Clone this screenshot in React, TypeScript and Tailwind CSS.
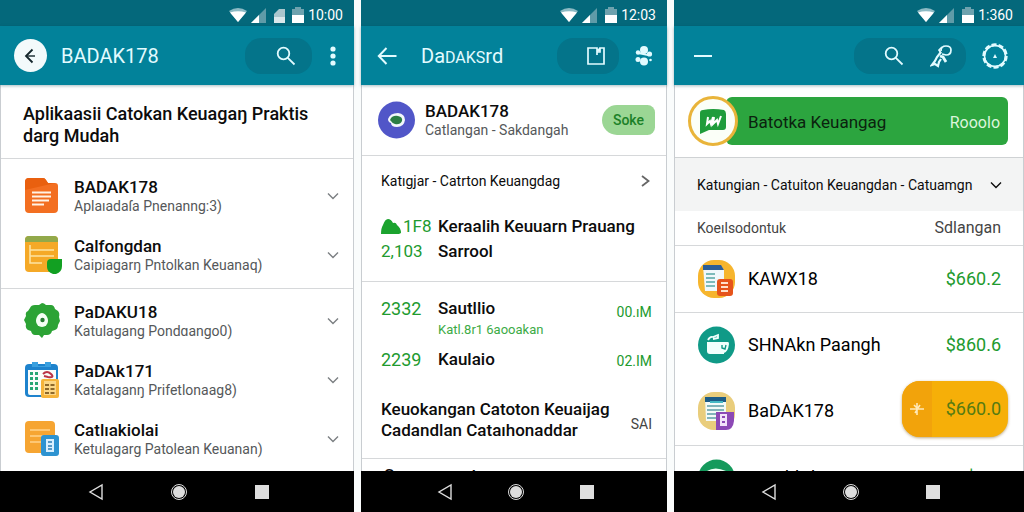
import type { ReactNode } from "react";

type PhoneProps = {
  actions: ReactNode;
  children: ReactNode;
  leading: ReactNode;
  hasStorage?: boolean;
  time: string;
  title?: ReactNode;
};

type EntryProps = {
  icon: ReactNode;
  title: string;
  subtitle: string;
};

function StatusBar({ time, hasStorage }: { time: string; hasStorage?: boolean }) {
  return (
    <div className="flex h-[26px] shrink-0 items-center justify-end bg-[#04687b] pt-1 pr-[11px] text-white">
      <svg width="18" height="14" viewBox="0 0 18 14" aria-hidden="true">
        <path d="M0 3Q9-3 18 3L9 14Z" fill="#8cbac4" />
        <path d="M1 4.500Q9 2 17 4.500L9 14Z" fill="#fff" />
      </svg>
      <svg width="15" height="15" viewBox="0 0 15 15" className="ml-1" aria-hidden="true">
        <path d="M15 0V15H0Z" fill="#5f9ba8" />
        <path d="M8 7V15H0Z" fill="#fff" />
      </svg>
      {hasStorage ? (
        <svg width="12" height="15" viewBox="0 0 12 15" className="ml-2" aria-hidden="true">
          <path d="M5 1h6v14H0V6Z" fill="#aac6cd" />
          <path d="M0 9h11v6H0Z" fill="#dbe8eb" />
        </svg>
      ) : null}
      <svg
        width="12"
        height="16"
        viewBox="0 0 12 16"
        className={hasStorage ? "ml-1.5" : "ml-2"}
        aria-hidden="true"
      >
        <path d="M3 0h6v2h3v14H0V2h3Z" fill="#6ea2ae" />
        <path d="M0 8h12v8H0Z" fill="#fff" />
      </svg>
      <span className="ml-1 text-sm leading-4">{time}</span>
    </div>
  );
}

function NavBar() {
  return (
    <nav className="flex h-[41px] shrink-0 justify-center bg-black pl-1">
      <div className="grid w-[71%] grid-cols-3 items-center justify-items-center">
        <button type="button" aria-label="Back">
          <svg width="16" height="18" viewBox="0 0 16 18">
            <path d="M14 2v14L2 9Z" fill="none" stroke="#ddd" strokeWidth="1.400" />
          </svg>
        </button>
        <button type="button" aria-label="Home">
          <svg width="18" height="18" viewBox="0 0 18 18">
            <circle cx="9" cy="9" r="7.500" fill="none" stroke="#ddd" strokeWidth="1" />
            <circle cx="9" cy="9" r="6" fill="#ddd" />
          </svg>
        </button>
        <button type="button" aria-label="Recent" className="size-3.5 bg-[#dedede]" />
      </div>
    </nav>
  );
}

function Phone({ actions, children, hasStorage, leading, time, title }: PhoneProps) {
  return (
    <section className="flex h-screen min-w-0 flex-col bg-white">
      <StatusBar time={time} hasStorage={hasStorage} />
      <header className="z-10 flex h-[59px] shrink-0 items-center bg-[#02829a] shadow-[0_1px_3px_rgba(0,60,80,0.35)]">
        {leading}
        {title ? <h1 className="text-xl text-[#e2fbff]">{title}</h1> : null}
        <div className="ml-auto flex items-center">{actions}</div>
      </header>
      <div className="flex min-h-0 flex-1 flex-col overflow-hidden border-x border-[#c9cdd1]">
        {children}
      </div>
      <NavBar />
    </section>
  );
}

function SearchIcon() {
  return (
    <svg width="20" height="20" viewBox="0 0 20 20" fill="none" stroke="#e2fbff" strokeWidth="1.800">
      <circle cx="7.500" cy="7.500" r="5.800" />
      <path d="M11.800 11.800 18.500 18.500" />
    </svg>
  );
}

function ChevronDown({ className }: { className?: string }) {
  return (
    <svg width="12" height="8" viewBox="0 0 12 8" fill="none" stroke="currentColor" strokeWidth="1.400" className={className}>
      <path d="M1 1.500 6 6.500 11 1.500" />
    </svg>
  );
}

function OrangeFileIcon() {
  return (
    <svg width="36" height="38" viewBox="0 0 36 38">
      <path d="M5 1h14q2 0 3 2l2 3h7q3 0 3 3v23q0 4-4 4H5q-4 0-4-4V5q0-4 4-4Z" fill="#f36f21" />
      <path d="M1 13V5q0-4 4-4h14q2 0 3 2l2 3h7" fill="#e9600f" />
      <path d="M8 15.500h19M8 19.500h19M8 23.500h17M8 27.500h12" stroke="#fff3e6" strokeWidth="2" />
    </svg>
  );
}

function YellowNoteIcon() {
  return (
    <svg width="38" height="38" viewBox="0 0 38 38">
      <rect x="1" y="0" width="33" height="36" rx="4" fill="#f5a927" />
      <path d="M1 6V4q0-4 4-4h25q4 0 4 4v2Z" fill="#92a94a" />
      <path d="M6 9v18h12M6 14h24M6 20h24" fill="none" stroke="#fde3a2" strokeWidth="1.600" />
      <path d="M23 27q0-4 4-4h11v7q0 6-6 8h-3q-6-2-6-7Z" fill="#12a022" />
    </svg>
  );
}

function GreenBadgeIcon() {
  return (
    <svg width="36" height="36" viewBox="0 0 36 36">
      <path
        d="M18 0q2 0 4 2l5 0q3 0 4 4l3 2q2 2 1 6l1 4-2 4q0 4-3 5l-3 1q-1 4-5 4h-3l-2 3-3-3h-4q-3 0-4-4l-3-1q-3-2-2-6L0 17l2-4q-1-4 2-5l2-3q1-3 5-3h4Z"
        fill="#2ca335"
      />
      <path d="M18 10c3 0 6 4 6 8a6 6 0 0 1-12 0c0-4 3-8 6-8Z" fill="#f5fff5" />
      <circle cx="18.500" cy="17" r="2.200" fill="#267a32" />
    </svg>
  );
}

function CalendarIcon() {
  return (
    <svg width="36" height="38" viewBox="0 0 36 38">
      <rect x="1" y="3" width="33" height="33" rx="4" fill="#1e83cd" />
      <path d="M8 1h6v4h7V1h6v5H8Z" fill="#3aa0df" />
      <path d="M4 9h28v25H6q-2 0-2-2Z" fill="#fbfdfb" />
      <path d="M6 12.500h3m2 0h3M6 17.500h3m2 0h3M6 22.500h3m2 0h3M6 27.500h3m2 0h3" stroke="#28a774" strokeWidth="3" />
      <path d="M19 13q4-4 8 0t-3 3l-4-1" fill="none" stroke="#bb3346" strokeWidth="2" />
      <rect x="17" y="18" width="18" height="19" rx="2" fill="#f6b43b" />
      <path d="M20 20h12v14H20Z" fill="#fbd787" />
      <path d="M21 24h10M21 28h10M21 32h10" stroke="#8d682b" strokeWidth="1.800" strokeDasharray="4 1.500" />
    </svg>
  );
}

function OrangeBlueIcon() {
  return (
    <svg width="36" height="38" viewBox="0 0 36 38">
      <rect x="1" y="1" width="30" height="32" rx="4" fill="#f6a532" />
      <path d="M6 10h20M6 16h18M6 22h12" stroke="#ffd28a" strokeWidth="1.600" />
      <rect x="17" y="15" width="18" height="21" rx="3" fill="#2d93d1" />
      <path d="M22 19h8v13h-8Z" fill="#d8efff" />
      <path d="M24 22h4m-4 4h4m-4 3h4" stroke="#2d7fb6" strokeWidth="1.400" />
    </svg>
  );
}

function Entry({ icon, title, subtitle }: EntryProps) {
  return (
    <li className="flex h-[59px] items-center pr-3.5 pl-[23px]">
      <span className="flex w-[50px] shrink-0">{icon}</span>
      <div className="min-w-0 flex-1">
        <p className="text-[17px] leading-5 font-medium text-[#0c0c0c]">{title}</p>
        <p className="text-sm leading-[18px] text-[#55585a]">{subtitle}</p>
      </div>
      <button type="button" aria-label={`Open ${title}`} className="text-[#7b7f82]">
        <ChevronDown />
      </button>
    </li>
  );
}

function CatalogPhone() {
  return (
    <Phone
      time="10:00"
      hasStorage
      title="BADAK178"
      leading={
        <button
          type="button"
          aria-label="Back"
          className="mr-3.5 ml-3.5 flex size-[33px] items-center justify-center rounded-full bg-[#f3fafb]"
        >
          <svg width="14" height="16" viewBox="0 0 14 16" fill="none" stroke="#14262b" strokeWidth="1.800">
            <path d="M8.500 1.500 2 8l6.500 6.500" />
            <path d="M2 8h9" strokeWidth="1.400" />
          </svg>
        </button>
      }
      actions={
        <>
          <button
            type="button"
            aria-label="Search"
            className="flex h-9 w-[67px] items-center justify-end rounded-2xl bg-[#04748a] pr-4"
          >
            <SearchIcon />
          </button>
          <button type="button" aria-label="More" className="px-[18px]">
            <svg width="6" height="20" viewBox="0 0 6 20" fill="#e2fbff">
              <circle cx="3" cy="3" r="2.600" />
              <circle cx="3" cy="10" r="2.600" />
              <circle cx="3" cy="17" r="2.600" />
            </svg>
          </button>
        </>
      }
    >
      <h2 className="border-b border-[#d6d8da] px-[22px] pt-[18px] pb-[11px] text-lg leading-[22px] font-medium text-[#0c0c0c]">
        Aplikaasii Catokan Keuagaŋ Praktis darg Mudah
      </h2>
      <ul className="border-b border-[#d6d8da] pt-[7px] pb-1">
        <Entry icon={<OrangeFileIcon />} title="BADAK178" subtitle="Aplaıadaſa Pnenanng:3)" />
        <Entry icon={<YellowNoteIcon />} title="Calfongdan" subtitle="Caipiagarŋ Pntolkan Keuanaq)" />
      </ul>
      <ul className="pt-0.5">
        <Entry icon={<GreenBadgeIcon />} title="PaDAKU18" subtitle="Katulagang Pondɑango0)" />
        <Entry icon={<CalendarIcon />} title="PaDAk171" subtitle="Katalaganŋ Prifetlonaag8)" />
        <Entry icon={<OrangeBlueIcon />} title="Catlıakiolai" subtitle="Ketulagarg Patolean Keuanan)" />
      </ul>
    </Phone>
  );
}

function LedgerPhone() {
  return (
    <Phone
      time="12:03"
      title={
        <>
          Da<span className="text-base">DAKS</span>rd
        </>
      }
      leading={
        <button type="button" aria-label="Back" className="mr-6 ml-4">
          <svg width="20" height="18" viewBox="0 0 20 18" fill="none" stroke="#e2fbff" strokeWidth="2">
            <path d="M9.500 1 1.800 9l7.700 8M2 9h17.500" />
          </svg>
        </button>
      }
      actions={
        <>
          <button
            type="button"
            aria-label="Documents"
            className="flex h-9 w-[62px] items-center justify-end rounded-2xl bg-[#04748a] pr-3.5"
          >
            <svg width="18" height="20" viewBox="0 0 18 20" fill="none" stroke="#e2fbff" strokeWidth="1.700">
              <path d="M1 2h9v4h3V2h4v16H1ZM10 9V6l3-4" />
            </svg>
          </button>
          <button type="button" aria-label="More" className="mr-3.5 ml-4">
            <svg width="18" height="20" viewBox="0 0 18 20" fill="#e2fbff">
              <circle cx="9" cy="4" r="4" />
              <circle cx="9" cy="15.500" r="4" />
              <circle cx="3" cy="6.500" r="2.200" />
              <circle cx="3" cy="13.500" r="2.500" />
              <circle cx="14.500" cy="8" r="2.600" />
              <circle cx="15.500" cy="14" r="1.300" />
              <path d="M3 5.500 15 9 13 10 3 8Z" />
            </svg>
          </button>
        </>
      }
    >
      <div className="flex h-[71px] shrink-0 items-center border-b border-[#d6d8da] pr-[11px] pl-4">
        <svg width="37" height="38" viewBox="0 0 37 38" className="mr-2.5 shrink-0" aria-hidden="true">
          <circle cx="18.500" cy="19" r="18.500" fill="#5156c8" />
          <path d="M10 18q2-6 10-6 7 1 7 7-1 7-8 7-6 0-6-4-3-1-3-4Z" fill="#f2f7fb" />
          <path d="M12 19q2-5 8-4 5 1 4 5-2 4-7 3-3-1-5-4Z" fill="#2b7d45" />
        </svg>
        <div className="min-w-0 flex-1">
          <p className="text-[17px] leading-5 font-medium text-[#0c0c0c]">BADAK178</p>
          <p className="text-sm leading-[18px] text-[#55585a]">Catlangan - Sakdangah</p>
        </div>
        <button
          type="button"
          className="h-[30px] w-[53px] rounded-l-2xl rounded-r-lg bg-[#9bd694] text-sm font-medium text-[#1b8128]"
        >
          Soke
        </button>
      </div>
      <button
        type="button"
        className="flex h-[50px] shrink-0 items-center justify-between pr-4 pl-[19px] text-left text-sm text-[#0c0c0c]"
      >
        Katıgjar - Catrton Keuangdag
        <svg width="9" height="12" viewBox="0 0 9 12" fill="none" stroke="#666" strokeWidth="1.800">
          <path d="M1 1 7.500 6 1 11" />
        </svg>
      </button>
      <dl className="grid shrink-0 grid-cols-[57px_1fr] border-b border-[#d6d8da] pt-2 pb-[17px] pl-[19px] text-[17px] leading-[25px]">
        <dt className="flex items-center gap-0.5 text-[#219a2e]">
          <svg width="20" height="17" viewBox="0 0 20 17" fill="#1ba32e" aria-hidden="true">
            <path d="M0 16q0-6 2-9 2-6 5-6 3 0 5 4 3-1 4 2 4 3 4 8l-2 1Z" />
          </svg>
          1F8
        </dt>
        <dd className="font-medium text-[#0c0c0c]">Keraalih Keuuarn Prauang</dd>
        <dt className="text-[#219a2e]">2,103</dt>
        <dd className="font-medium text-[#0c0c0c]">Sarrool</dd>
      </dl>
      <dl className="grid shrink-0 grid-cols-[57px_1fr_auto] pt-3.5 pr-3.5 pl-[19px] text-[17px] leading-[25px]">
        <dt className="text-lg leading-[25px] text-[#219a2e]">2332</dt>
        <dd className="font-medium text-[#0c0c0c]">
          Sautllio
          <span className="block text-[13px] leading-[18px] font-normal text-[#3cab46]">
            Katl.8r1 6aooakan
          </span>
        </dd>
        <dd className="pt-1 text-sm leading-[25px] text-[#219a2e]">00.ıM</dd>
        <dt className="pt-2 text-lg leading-[25px] text-[#219a2e]">2239</dt>
        <dd className="pt-2 font-medium text-[#0c0c0c]">Kaulaio</dd>
        <dd className="pt-2.5 text-sm leading-[25px] text-[#219a2e]">02.IM</dd>
      </dl>
      <div className="flex shrink-0 items-center justify-between border-b border-[#d6d8da] pt-[25px] pr-3.5 pb-[17px] pl-[19px]">
        <h2 className="text-[17px] leading-[21px] font-medium text-[#0c0c0c]">
          Keuokangan Catoton Keuaijag
          <br />
          Cadandlan Cataıhonaddar
        </h2>
        <span className="pt-2 text-sm text-[#444]">SAI</span>
      </div>
      <p className="pt-1 pl-[22px] text-[17px] leading-6 font-medium text-[#0c0c0c]">Sarmoonaat</p>
    </Phone>
  );
}

function ReportIcon() {
  return (
    <svg width="37" height="38" viewBox="0 0 37 38">
      <rect width="37" height="38" rx="16" fill="#f6b52e" />
      <path d="M5 6h18l3 4v21H7Z" fill="#f0f7fb" />
      <path d="M5 5h18l3 5H5Z" fill="#2d5e96" />
      <path d="M8 14h9M8 18h9M8 22h9M8 26h9" stroke="#55a7a5" strokeWidth="1.600" />
      <rect x="19" y="19" width="16" height="17" rx="3" fill="#e6541b" />
      <path d="M23 23h7m-7 4h7m-7 4h7" stroke="#ffe1cb" strokeWidth="2" />
    </svg>
  );
}

function WalletIcon() {
  return (
    <svg width="37" height="38" viewBox="0 0 37 38">
      <circle cx="18.500" cy="19" r="18.500" fill="#109a87" />
      <path d="M9 16h21q1 0 1 2-1 8-5 9v1H12q-3 0-3-3Z" fill="#f1fffc" />
      <path d="M10 14q2-4 5-3l5-2v3l-5 1" fill="none" stroke="#f1fffc" strokeWidth="1.800" />
      <path d="M24 19v3l3 1 1-4" fill="none" stroke="#109a87" strokeWidth="1.400" />
    </svg>
  );
}

function InvoiceIcon() {
  return (
    <svg width="37" height="38" viewBox="0 0 37 38">
      <rect width="37" height="38" rx="16" fill="#e9cd7c" />
      <path d="M7 5h21v24H8Z" fill="#f3faf8" />
      <path d="M7 5h21v5H7Z" fill="#1c5c87" />
      <path d="M12 10h13" stroke="#46b8c4" strokeWidth="2" />
      <path d="M9 14h17M9 18h17M9 22h10M9 26h9" stroke="#5d9da5" strokeWidth="1.400" />
      <path d="M18 20h18v9q-1 9-8 9H18Z" fill="#8c48b5" />
      <path d="M22 22h7v12h-7Z" fill="#f3e3fa" />
      <path d="M24 25h3m-3 5h3" stroke="#8c48b5" strokeWidth="2" />
    </svg>
  );
}

function GreenCupIcon() {
  return (
    <svg width="37" height="38" viewBox="0 0 37 38">
      <circle cx="18.500" cy="19" r="18.500" fill="#159a5c" />
      <path d="M9 12q8-5 19 0v14H9Z" fill="#f1fff6" />
    </svg>
  );
}

function BalancePhone() {
  return (
    <Phone
      time="1:360"
      leading={
        <button type="button" aria-label="Menu" className="ml-5 h-5">
          <span className="block h-0.5 w-[18px] bg-[#e2fbff]" />
        </button>
      }
      actions={
        <>
          <div className="flex h-9 w-28 items-center justify-end gap-[26px] rounded-2xl bg-[#04748a] pr-3.5">
            <button type="button" aria-label="Search">
              <SearchIcon />
            </button>
            <button type="button" aria-label="Tools">
              <svg width="22" height="24" viewBox="0 0 22 24" fill="none" stroke="#e2fbff" strokeWidth="1.700">
                <path d="M11 7q0-5 5-5 5 0 5 4 0 5-5 5l-4-1" />
                <path d="M12 3 9 6l2 3" />
                <path d="M11 8 7 13l-2 4-3 4 3-1 3 2 1-4 2-3" strokeWidth="2.200" />
                <path d="m10 12 3 1 3 5" strokeWidth="2.800" />
              </svg>
            </button>
          </div>
          <button type="button" aria-label="Settings" className="mr-4 ml-4">
            <svg width="26" height="26" viewBox="0 0 26 26" fill="none" stroke="#e2fbff">
              <circle cx="13" cy="13" r="10.500" strokeWidth="1.600" />
              <circle cx="13" cy="13" r="11.200" strokeWidth="3" strokeDasharray="5 2" />
              <path d="M13 11 15 15h-4Z" fill="#e2fbff" stroke="none" />
            </svg>
          </button>
        </>
      }
    >
      <div className="flex h-[73px] shrink-0 items-center border-b border-[#cfd2d4] pr-[15px] pl-[13px]">
        <div className="z-10 -mr-3 flex size-[50px] shrink-0 items-center justify-center rounded-full border-3 border-[#e9b43a] bg-[#fbfff8]">
          <svg width="28" height="26" viewBox="0 0 28 26" aria-hidden="true">
            <path d="M4 2q10-2 21 0 2 1 2 4v13q0 3-3 3H10l-9 4V5q0-3 3-3Z" fill="#1f9c3b" />
            <path d="m9 9-1 7 3-3 1 3 2-7m1 0-1 7 4-4 1 4 3-8" fill="none" stroke="#fff" strokeWidth="2" />
          </svg>
        </div>
        <div className="flex h-12 flex-1 items-center justify-between rounded-md bg-[#2ca53f] pt-1 pr-2 pl-[22px]">
          <h2 className="text-[17px] text-[#0b220e]">Batotka Keuangag</h2>
          <button type="button" className="text-base text-[#dcf5dc]">
            Rooolo
          </button>
        </div>
      </div>
      <button
        type="button"
        className="flex h-[53px] shrink-0 items-center justify-between bg-[#f3f4f4] pr-[21px] pl-[22px] text-left text-sm whitespace-nowrap text-[#0c0c0c]"
      >
        Katungian - Catuiton Keuangdan - Catuamgn
        <ChevronDown className="shrink-0" />
      </button>
      <table className="w-full text-lg">
        <thead>
          <tr className="h-[34px] border-b border-[#d6d8da] text-[#444]">
            <th scope="col" className="pl-[22px] text-left text-sm font-normal">
              Koeılsodontuk
            </th>
            <th scope="col" className="pr-[22px] text-right text-base font-normal">
              Sdlangan
            </th>
          </tr>
        </thead>
        <tbody>
          <tr className="h-[67px] border-b border-[#d6d8da]">
            <td className="pl-[23px]">
              <span className="flex items-center gap-[13px]">
                <ReportIcon />
                KAWX18
              </span>
            </td>
            <td className="pr-[22px] text-right text-[#219a2e]">$660.2</td>
          </tr>
          <tr className="h-[66px]">
            <td className="pl-[23px]">
              <span className="flex items-center gap-[13px]">
                <WalletIcon />
                SHNAkn Paangh
              </span>
            </td>
            <td className="pr-[22px] text-right text-[#219a2e]">$860.6</td>
          </tr>
          <tr className="h-[67px] border-b border-[#d6d8da]">
            <td className="pl-[23px]">
              <span className="flex items-center gap-[13px]">
                <InvoiceIcon />
                BaDAK178
              </span>
            </td>
            <td className="pr-[15px] pb-1">
              <button
                type="button"
                className="ml-auto flex h-14 w-[106px] items-center justify-between overflow-hidden rounded-[18px] bg-[#f6af08] pr-[7px] text-[#557b12] shadow-[0_1px_3px_rgba(120,80,0,0.5)]"
              >
                <span className="flex h-full w-[30px] items-center justify-center bg-[#f2a30b]">
                  <svg width="14" height="14" viewBox="0 0 14 14" stroke="#ffe9b8" strokeWidth="1.600" aria-hidden="true">
                    <path d="M0 7h14M7 1v12M4 3l3 3M10 3l-2 3M5 11l2-3" />
                  </svg>
                </span>
                $660.0
              </button>
            </td>
          </tr>
          <tr className="h-[66px]">
            <td className="pl-[23px]">
              <span className="flex items-center gap-[13px]">
                <GreenCupIcon />
                BataldAkt
              </span>
            </td>
            <td className="pr-[22px] text-right text-[#219a2e]">$0.8</td>
          </tr>
        </tbody>
      </table>
    </Phone>
  );
}

export default function App() {
  return (
    <main className="grid grid-cols-[354fr_306fr_350fr] gap-[7px] bg-[#fafcfc] font-['Roboto',sans-serif]">
      <CatalogPhone />
      <LedgerPhone />
      <BalancePhone />
    </main>
  );
}
